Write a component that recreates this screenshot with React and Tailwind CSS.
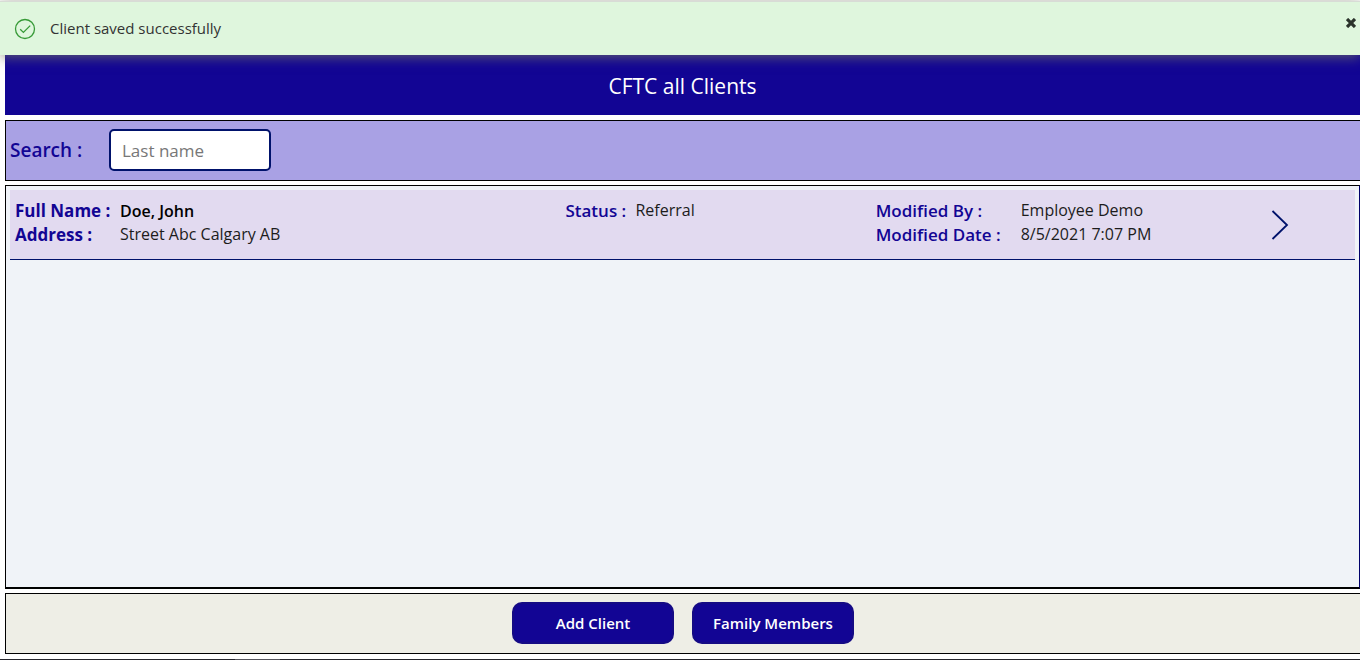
import React from "react";

const client = {
  name: "Doe, John",
  address: "Street Abc Calgary AB",
  status: "Referral",
  modifiedBy: "Employee Demo",
  modifiedDate: "8/5/2021 7:07 PM",
};

function Notice() {
  return (
    <div
      role="status"
      className="relative z-10 mt-px flex h-[54px] items-center border-t border-[#d8dcd6] bg-[#dff6dd] pl-3.5 shadow-[0_2px_12px_rgba(120,120,100,0.75)]"
    >
      <svg className="size-[22px]" viewBox="0 0 22 22" fill="none" stroke="#379a37" strokeWidth="1.3" aria-hidden="true">
        <circle cx="11" cy="11" r="9.5" />
        <path d="M6.2 11.2 9.4 14.4 16.2 7.6" />
      </svg>
      <p className="ml-3.5 text-[15px] text-[#333]">Client saved successfully</p>
      <button type="button" aria-label="Close" className="ml-auto mr-[3px] mb-3 flex size-3 items-center justify-center">
        <svg className="size-2.5" viewBox="0 0 10 10" stroke="#2b332b" strokeWidth="3.2" aria-hidden="true">
          <path d="M1 1 9 9M9 1 1 9" />
        </svg>
      </button>
    </div>
  );
}

function Label({ strong, children }) {
  return (
    <dt className={strong ? "text-[17px] leading-6 font-bold text-[#120594]" : "text-[17px] leading-6 font-semibold text-[#120594]"}>
      {children}
    </dt>
  );
}

function Value({ strong, children }) {
  return (
    <dd className={strong ? "text-base leading-6 font-semibold text-black" : "text-base leading-[22px] text-[#1c1c1c]"}>
      {children}
    </dd>
  );
}

function ClientRow({ item }) {
  return (
    <li className="flex min-h-[70px] items-start border-b border-[#00126b] bg-[#e2daf0] px-[5px]">
      <dl className="grid grow-[550] basis-0 grid-cols-[105px_1fr] pt-[9px]">
        <Label strong>Full Name :</Label>
        <Value strong>{item.name}</Value>
        <Label strong>Address :</Label>
        <Value>{item.address}</Value>
      </dl>
      <dl className="grid grow-[310] basis-0 grid-cols-[70px_1fr] pt-[9px]">
        <Label>Status :</Label>
        <Value>{item.status}</Value>
      </dl>
      <dl className="grid grow-[389] basis-0 grid-cols-[145px_1fr] pt-[9px]">
        <Label>Modified By :</Label>
        <Value>{item.modifiedBy}</Value>
        <Label>Modified Date :</Label>
        <Value>{item.modifiedDate}</Value>
      </dl>
      <button type="button" aria-label={`Open ${item.name}`} className="mr-[55px] flex size-[30px] items-center justify-center self-center">
        <svg className="h-[30px] w-[18px]" viewBox="0 0 18 30" fill="none" stroke="#00126b" strokeWidth="1.8" aria-hidden="true">
          <path d="M1.5 1 16 15 1.5 29" />
        </svg>
      </button>
    </li>
  );
}

function ActionButton({ children }) {
  return (
    <button
      type="button"
      className="h-[42px] w-[162px] rounded-[10px] border-2 border-[#150b84] bg-[#120594] text-[15px] font-semibold text-white"
    >
      {children}
    </button>
  );
}

export default function App() {
  return (
    <div className="flex min-h-screen flex-col bg-white font-['Open_Sans',sans-serif] text-black">
      <Notice />
      <main className="flex flex-1 flex-col pb-[5px] pl-[5px]">
        <h1 className="flex h-[60px] items-center justify-center bg-[#120594] pt-1 text-[21px] text-white">
          CFTC all Clients
        </h1>
        <div className="mt-[5px] flex h-[61px] items-center border-y border-l border-black bg-[#a9a1e4] pb-px pl-1">
          <label htmlFor="last-name" className="w-[99px] text-[19px] font-semibold text-[#120594]">
            Search :
          </label>
          <input
            id="last-name"
            type="text"
            placeholder="Last name"
            className="h-[42px] w-[162px] rounded-[5px] border-2 border-[#00126b] bg-white px-[11px] text-[17px] outline-none placeholder:text-[#777]"
          />
        </div>
        <ul className="mt-1 flex flex-1 flex-col border border-b-2 border-black border-r-[#00006b] bg-[#f0f3f8] p-1">
          <ClientRow item={client} />
        </ul>
        <footer className="mt-1 flex h-[61px] items-center justify-center gap-[18px] border-y border-l border-black bg-[#eeeee6] pb-px">
          <ActionButton>Add Client</ActionButton>
          <ActionButton>Family Members</ActionButton>
        </footer>
      </main>
      <div className="flex h-px bg-[#26262c]">
        <div className="ml-[17.3%] w-[3.3%] bg-[#55555c]" />
      </div>
    </div>
  );
}
